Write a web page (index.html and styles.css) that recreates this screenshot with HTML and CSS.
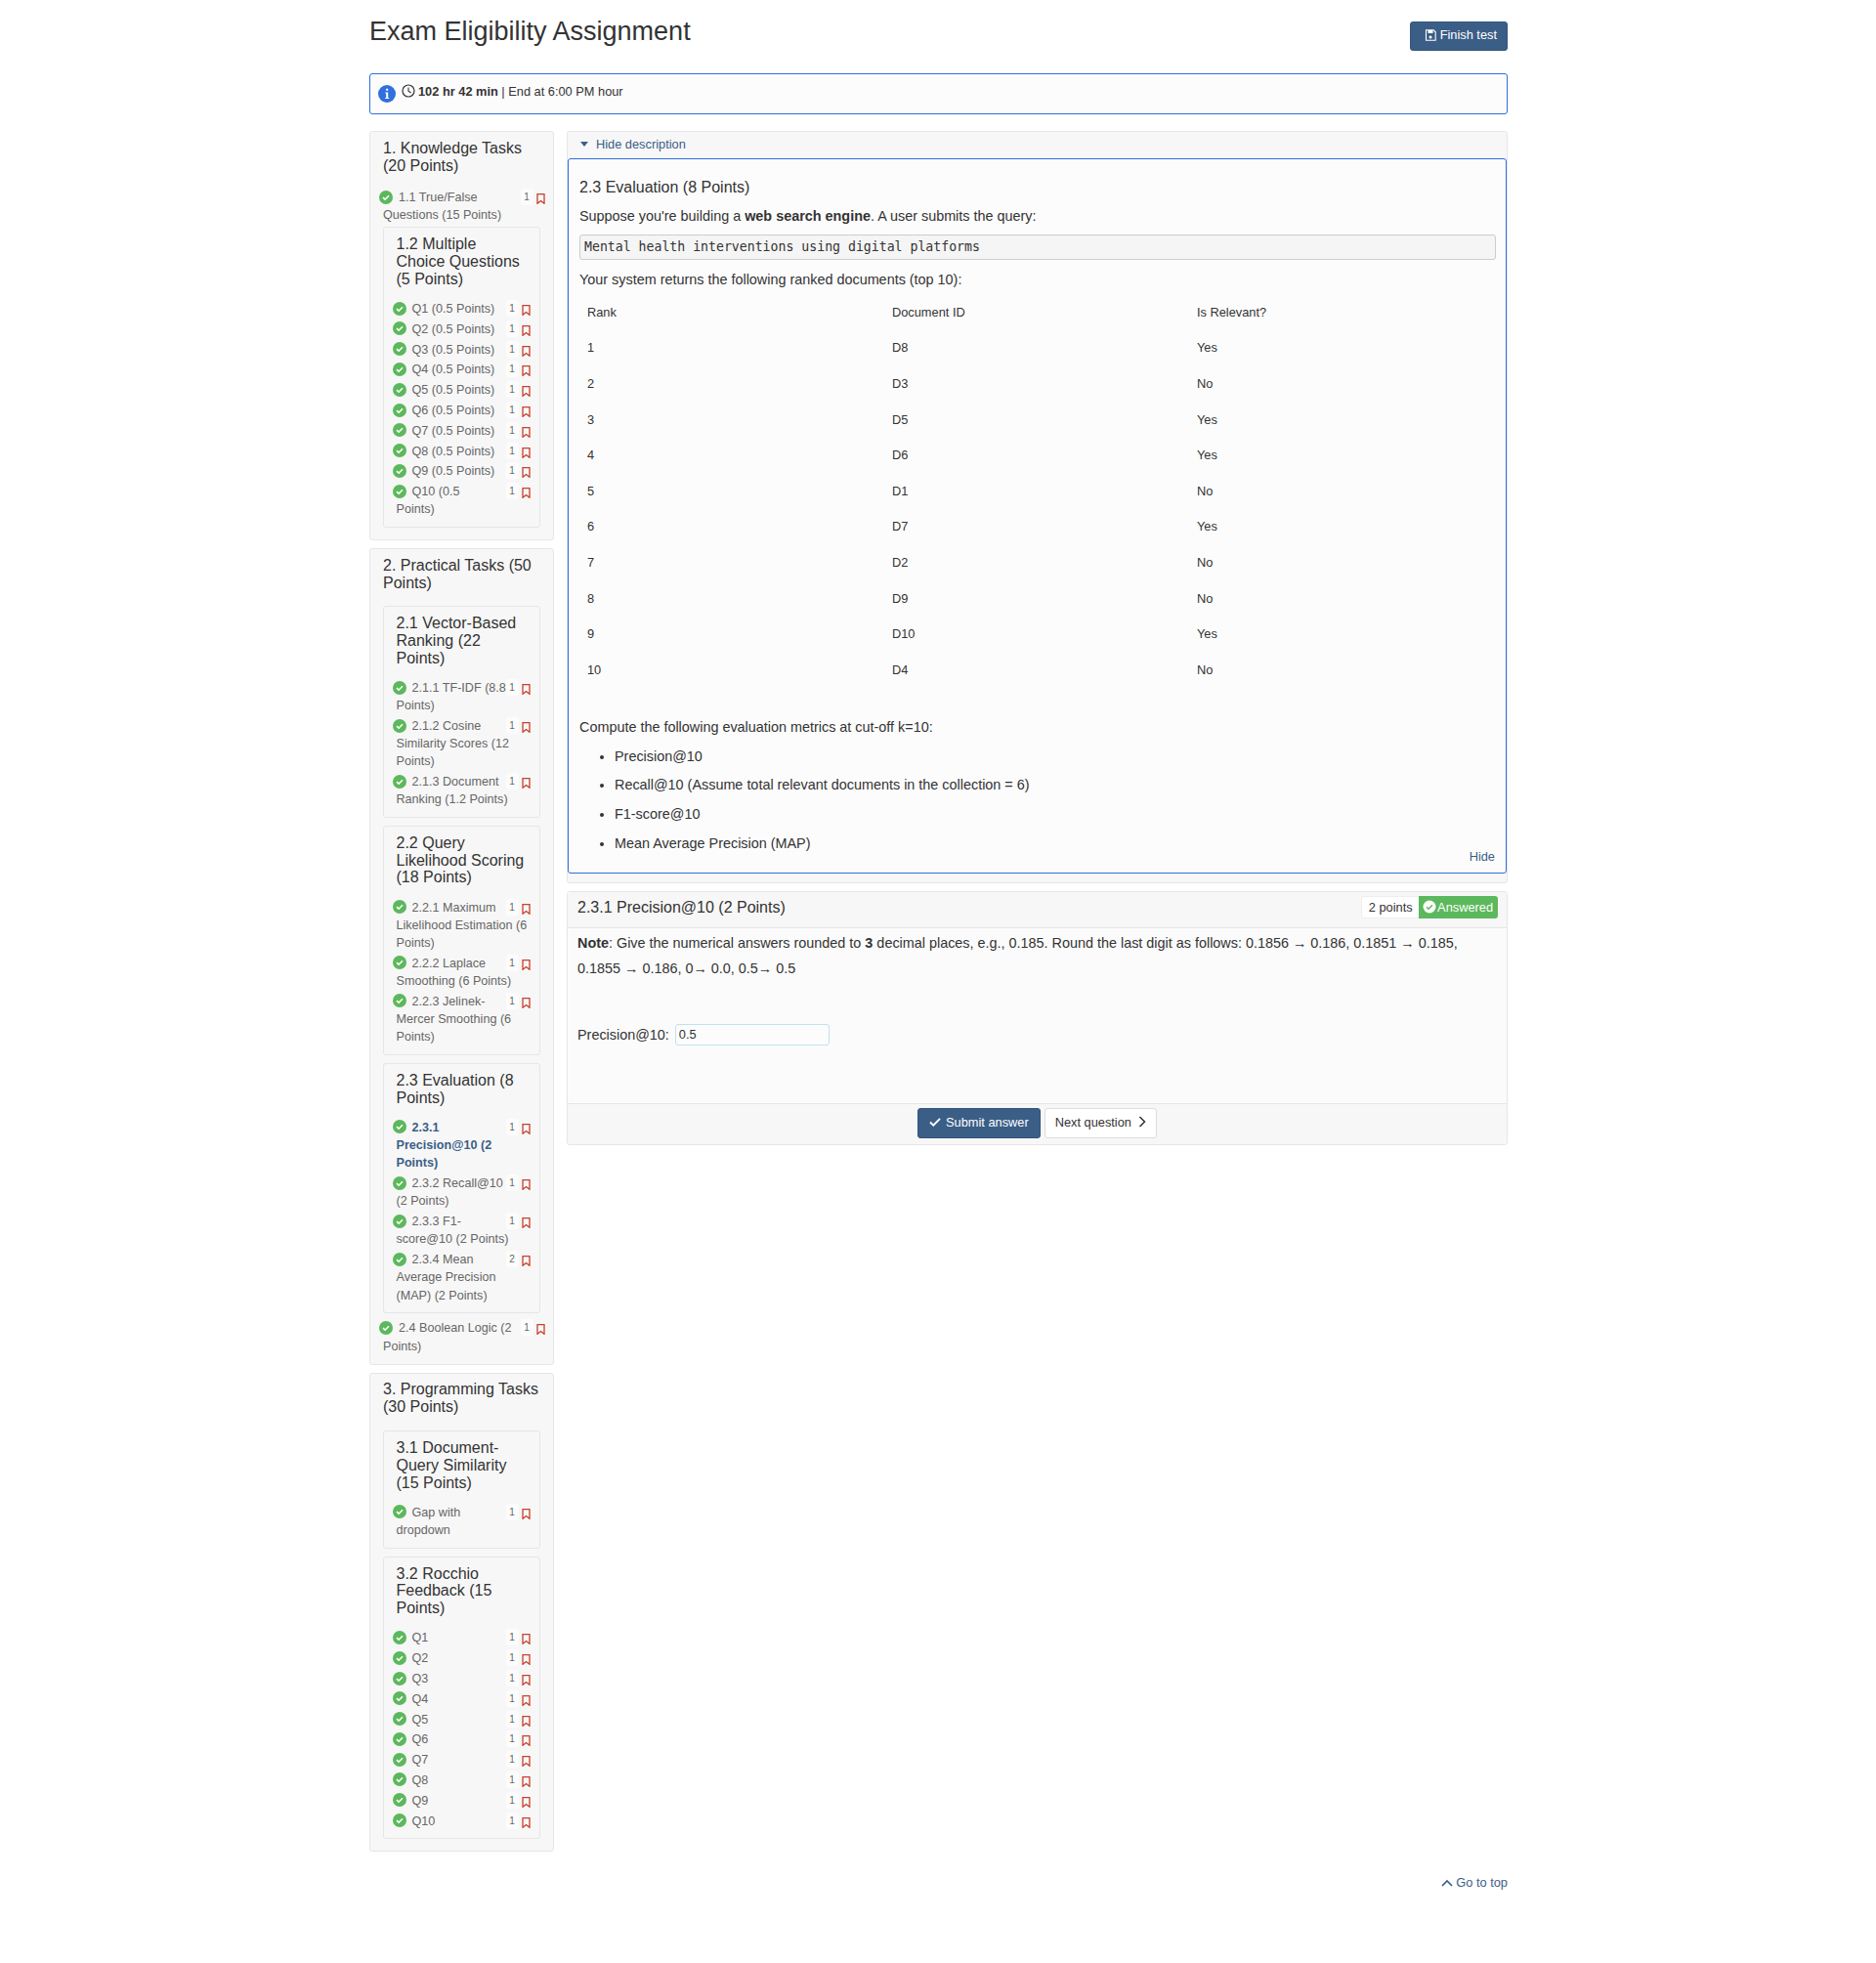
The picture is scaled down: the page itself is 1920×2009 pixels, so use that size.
FILE: index.html
```html
<!DOCTYPE html>
<html lang="en">
<head>
<meta charset="utf-8">
<title>Exam Eligibility Assignment</title>
<link rel="stylesheet" href="styles.css">
</head>
<body>
<svg class="defs" width="0" height="0">
<symbol id="ok" viewBox="0 0 14 14"><circle cx="7" cy="7" r="7" fill="#5cb85c"/><path d="M4 7.200l2.100 2L10 5.300" fill="none" stroke="#fff" stroke-width="1.600"/></symbol>
<symbol id="bm" viewBox="0 0 9 11"><path d="M1 .7h7v9.600L4.500 7.600 1 10.300z" fill="none" stroke="#c9402c" stroke-width="1.300"/></symbol>
</svg>
<div class="page">
  <header class="top">
    <h1 class="title">Exam Eligibility Assignment</h1>
    <a class="btn btn-primary finish"><svg class="ic" viewBox="0 0 12 12" width="12" height="12"><path d="M1.500.8h7.700l2 2v8.400h-9.700z" fill="none" stroke="#fff" stroke-width="1.100"/><path d="M3.500 1h5v3h-5z" fill="#fff"/><circle cx="6" cy="8" r="1.500" fill="#fff"/></svg>Finish test</a>
  </header>
  <div class="alert">
    <svg class="info" viewBox="0 0 18 18" width="18" height="18"><circle cx="9" cy="9" r="9" fill="#2f6fde"/><path d="M7.300 7.500h2.900v5.500h1v1H7.200v-1h1v-4.500h-1z M8.100 3.700h2.100v2.100H8.100z" fill="#fff"/></svg>
    <svg class="clock" viewBox="0 0 14 14" width="14" height="14"><circle cx="7" cy="7" r="6" fill="none" stroke="#333" stroke-width="1.200"/><path d="M7 3.500V7.300L9.600 9" fill="none" stroke="#333" stroke-width="1.100"/></svg>
    <span><b class="time">102 hr 42 min</b> | End at 6:00 PM hour</span>
  </div>
  <div class="layout">
    <aside class="side">
      <section class="box">
        <h4 class="head">1. Knowledge Tasks (20 Points)</h4>
        <div class="item"><span class="flag"><i>1</i><svg class="bm"><use href="#bm"/></svg></span><svg class="ok"><use href="#ok"/></svg>1.1 True/False Questions (15 Points)</div>
        <div class="box sub">
          <h4 class="head">1.2 Multiple Choice Questions (5 Points)</h4>
          <div class="item"><span class="flag"><i>1</i><svg class="bm"><use href="#bm"/></svg></span><svg class="ok"><use href="#ok"/></svg>Q1 (0.5 Points)</div>
          <div class="item"><span class="flag"><i>1</i><svg class="bm"><use href="#bm"/></svg></span><svg class="ok"><use href="#ok"/></svg>Q2 (0.5 Points)</div>
          <div class="item"><span class="flag"><i>1</i><svg class="bm"><use href="#bm"/></svg></span><svg class="ok"><use href="#ok"/></svg>Q3 (0.5 Points)</div>
          <div class="item"><span class="flag"><i>1</i><svg class="bm"><use href="#bm"/></svg></span><svg class="ok"><use href="#ok"/></svg>Q4 (0.5 Points)</div>
          <div class="item"><span class="flag"><i>1</i><svg class="bm"><use href="#bm"/></svg></span><svg class="ok"><use href="#ok"/></svg>Q5 (0.5 Points)</div>
          <div class="item"><span class="flag"><i>1</i><svg class="bm"><use href="#bm"/></svg></span><svg class="ok"><use href="#ok"/></svg>Q6 (0.5 Points)</div>
          <div class="item"><span class="flag"><i>1</i><svg class="bm"><use href="#bm"/></svg></span><svg class="ok"><use href="#ok"/></svg>Q7 (0.5 Points)</div>
          <div class="item"><span class="flag"><i>1</i><svg class="bm"><use href="#bm"/></svg></span><svg class="ok"><use href="#ok"/></svg>Q8 (0.5 Points)</div>
          <div class="item"><span class="flag"><i>1</i><svg class="bm"><use href="#bm"/></svg></span><svg class="ok"><use href="#ok"/></svg>Q9 (0.5 Points)</div>
          <div class="item"><span class="flag"><i>1</i><svg class="bm"><use href="#bm"/></svg></span><svg class="ok"><use href="#ok"/></svg>Q10 (0.5<br>Points)</div>
        </div>
      </section>
      <section class="box">
        <h4 class="head">2. Practical Tasks (50 Points)</h4>
        <div class="box sub">
          <h4 class="head">2.1 Vector-Based Ranking (22 Points)</h4>
          <div class="item"><span class="flag"><i>1</i><svg class="bm"><use href="#bm"/></svg></span><svg class="ok"><use href="#ok"/></svg>2.1.1 TF-IDF (8.8 Points)</div>
          <div class="item"><span class="flag"><i>1</i><svg class="bm"><use href="#bm"/></svg></span><svg class="ok"><use href="#ok"/></svg>2.1.2 Cosine Similarity Scores (12 Points)</div>
          <div class="item"><span class="flag"><i>1</i><svg class="bm"><use href="#bm"/></svg></span><svg class="ok"><use href="#ok"/></svg>2.1.3 Document Ranking (1.2 Points)</div>
        </div>
        <div class="box sub">
          <h4 class="head">2.2 Query Likelihood Scoring (18 Points)</h4>
          <div class="item"><span class="flag"><i>1</i><svg class="bm"><use href="#bm"/></svg></span><svg class="ok"><use href="#ok"/></svg>2.2.1 Maximum Likelihood Estimation (6 Points)</div>
          <div class="item"><span class="flag"><i>1</i><svg class="bm"><use href="#bm"/></svg></span><svg class="ok"><use href="#ok"/></svg>2.2.2 Laplace Smoothing (6 Points)</div>
          <div class="item"><span class="flag"><i>1</i><svg class="bm"><use href="#bm"/></svg></span><svg class="ok"><use href="#ok"/></svg>2.2.3 Jelinek-Mercer Smoothing (6 Points)</div>
        </div>
        <div class="box sub">
          <h4 class="head">2.3 Evaluation (8 Points)</h4>
          <div class="item current"><span class="flag"><i>1</i><svg class="bm"><use href="#bm"/></svg></span><svg class="ok"><use href="#ok"/></svg>2.3.1 Precision@10 (2 Points)</div>
          <div class="item"><span class="flag"><i>1</i><svg class="bm"><use href="#bm"/></svg></span><svg class="ok"><use href="#ok"/></svg>2.3.2 Recall@10 (2 Points)</div>
          <div class="item"><span class="flag"><i>1</i><svg class="bm"><use href="#bm"/></svg></span><svg class="ok"><use href="#ok"/></svg>2.3.3 F1-score@10 (2 Points)</div>
          <div class="item"><span class="flag"><i>2</i><svg class="bm"><use href="#bm"/></svg></span><svg class="ok"><use href="#ok"/></svg>2.3.4 Mean Average Precision (MAP) (2 Points)</div>
        </div>
        <div class="item"><span class="flag"><i>1</i><svg class="bm"><use href="#bm"/></svg></span><svg class="ok"><use href="#ok"/></svg>2.4 Boolean Logic (2 Points)</div>
      </section>
      <section class="box">
        <h4 class="head">3. Programming Tasks (30 Points)</h4>
        <div class="box sub">
          <h4 class="head">3.1 Document-Query Similarity (15 Points)</h4>
          <div class="item"><span class="flag"><i>1</i><svg class="bm"><use href="#bm"/></svg></span><svg class="ok"><use href="#ok"/></svg>Gap with dropdown</div>
        </div>
        <div class="box sub">
          <h4 class="head">3.2 Rocchio Feedback (15 Points)</h4>
          <div class="item"><span class="flag"><i>1</i><svg class="bm"><use href="#bm"/></svg></span><svg class="ok"><use href="#ok"/></svg>Q1</div>
          <div class="item"><span class="flag"><i>1</i><svg class="bm"><use href="#bm"/></svg></span><svg class="ok"><use href="#ok"/></svg>Q2</div>
          <div class="item"><span class="flag"><i>1</i><svg class="bm"><use href="#bm"/></svg></span><svg class="ok"><use href="#ok"/></svg>Q3</div>
          <div class="item"><span class="flag"><i>1</i><svg class="bm"><use href="#bm"/></svg></span><svg class="ok"><use href="#ok"/></svg>Q4</div>
          <div class="item"><span class="flag"><i>1</i><svg class="bm"><use href="#bm"/></svg></span><svg class="ok"><use href="#ok"/></svg>Q5</div>
          <div class="item"><span class="flag"><i>1</i><svg class="bm"><use href="#bm"/></svg></span><svg class="ok"><use href="#ok"/></svg>Q6</div>
          <div class="item"><span class="flag"><i>1</i><svg class="bm"><use href="#bm"/></svg></span><svg class="ok"><use href="#ok"/></svg>Q7</div>
          <div class="item"><span class="flag"><i>1</i><svg class="bm"><use href="#bm"/></svg></span><svg class="ok"><use href="#ok"/></svg>Q8</div>
          <div class="item"><span class="flag"><i>1</i><svg class="bm"><use href="#bm"/></svg></span><svg class="ok"><use href="#ok"/></svg>Q9</div>
          <div class="item"><span class="flag"><i>1</i><svg class="bm"><use href="#bm"/></svg></span><svg class="ok"><use href="#ok"/></svg>Q10</div>
        </div>
      </section>
    </aside>
    <main class="main">
      <section class="desc">
        <a class="toggle"><span class="caret"></span>Hide description</a>
        <div class="desc-body">
          <h4 class="desc-title">2.3 Evaluation (8 Points)</h4>
          <p class="lead">Suppose you're building a <b>web search engine</b>. A user submits the query:</p>
          <pre class="code">Mental health interventions using digital platforms</pre>
          <p class="intro">Your system returns the following ranked documents (top 10):</p>
          <table class="docs">
            <tr><td>Rank</td><td>Document ID</td><td>Is Relevant?</td></tr>
            <tr><td>1</td><td>D8</td><td>Yes</td></tr>
            <tr><td>2</td><td>D3</td><td>No</td></tr>
            <tr><td>3</td><td>D5</td><td>Yes</td></tr>
            <tr><td>4</td><td>D6</td><td>Yes</td></tr>
            <tr><td>5</td><td>D1</td><td>No</td></tr>
            <tr><td>6</td><td>D7</td><td>Yes</td></tr>
            <tr><td>7</td><td>D2</td><td>No</td></tr>
            <tr><td>8</td><td>D9</td><td>No</td></tr>
            <tr><td>9</td><td>D10</td><td>Yes</td></tr>
            <tr><td>10</td><td>D4</td><td>No</td></tr>
          </table>
          <p class="compute">Compute the following evaluation metrics at cut-off k=10:</p>
          <ul class="metrics">
            <li>Precision@10</li>
            <li>Recall@10 (Assume total relevant documents in the collection = 6)</li>
            <li>F1-score@10</li>
            <li>Mean Average Precision (MAP)</li>
          </ul>
          <a class="hide">Hide</a>
        </div>
      </section>
      <section class="question">
        <div class="q-head">
          <h4 class="q-title">2.3.1 Precision@10 (2 Points)</h4>
          <div class="q-status"><span class="points">2 points</span><span class="answered"><svg class="ans-ic" viewBox="0 0 14 14"><circle cx="7" cy="7" r="6.500" fill="#fff"/><path d="M4 7.200l2.100 2L10 5.300" fill="none" stroke="#5cb85c" stroke-width="1.500"/></svg>Answered</span></div>
        </div>
        <div class="q-body">
          <p class="note"><b>Note</b>: Give the numerical answers rounded to <b>3</b> decimal places, e.g., 0.185. Round the last digit as follows: 0.1856 → 0.186, 0.1851 → 0.185, 0.1855 → 0.186, 0→ 0.0, 0.5→ 0.5</p>
          <div class="answer"><label for="p10">Precision@10:</label><input id="p10" class="field" type="text" value="0.5"></div>
        </div>
        <div class="q-foot">
          <a class="btn btn-primary submit"><svg class="ic" viewBox="0 0 12 12" width="12" height="12"><path d="M1 6.500l3.300 3.200L11 2.800" fill="none" stroke="#fff" stroke-width="1.900"/></svg>Submit answer</a>
          <a class="btn btn-default">Next question<svg class="ic-r" viewBox="0 0 8 12" width="8" height="12"><path d="M1.500 1l5 5-5 5" fill="none" stroke="#333" stroke-width="1.500"/></svg></a>
        </div>
      </section>
    </main>
  </div>
  <footer class="foot"><a class="gotop"><svg viewBox="0 0 12 8" width="12" height="8"><path d="M1 7l5-5 5 5" fill="none" stroke="#3b5e87" stroke-width="1.700"/></svg>Go to top</a></footer>
</div>
</body>
</html>
```

FILE: styles.css
```css
* { box-sizing: border-box; }
html, body { margin: 0; padding: 0; background: #fff; }
body { font-family: "Liberation Sans", Arial, sans-serif; font-size: 14px; color: #333; }
.defs { position: absolute; }
.page { width: 1165px; margin-left: 378px; }
.top { display: flex; justify-content: space-between; align-items: flex-start; height: 75px; padding-top: 15px; }
.title { margin: 0; font-size: 27px; line-height: 34px; font-weight: 400; color: #333; }
.btn { display: inline-flex; align-items: center; height: 30px; padding: 0 10px 2px; border-radius: 3px; font-size: 12.8px; border: 1px solid transparent; }
.btn-primary { background: #3b5e87; border-color: #34547a; color: #fff; }
.btn-default { background: #fff; border-color: #ddd; color: #333; }
.finish { margin-top: 7px; padding: 0 10px 3px 14px; }
.ic { margin-right: 4px; }
.ic-r { margin-left: 7px; }
.submit { padding: 0 11px 2px; }
.submit .ic { margin-right: 5px; }
.alert { display: flex; align-items: center; height: 42px; padding: 0 8px 6px; border: 1px solid #2f6fde; border-radius: 3px; background: #fcfcfc; font-size: 12.8px; }
.info { margin-right: 6px; margin-top: 5px; }
.clock { margin-right: 3px; }
.time { font-weight: 700; }
.layout { display: flex; gap: 13.500px; align-items: flex-start; margin-top: 17px; }
.side { width: 188.500px; flex: none; display: flex; flex-direction: column; gap: 7.600px; }
.box { background: #f7f7f7; border: 1px solid #e6e6e6; border-radius: 3px; padding: 7.700px 13px 6.700px; }
.sub { margin: 0 0 6px; padding: 8px 0 8.700px 12.500px; }
.sub + .sub { margin-top: 7.600px; }
.side > .box > .sub:last-child { margin-bottom: 5.300px; }
.head { margin: 0 0 14.500px; font-size: 16px; line-height: 18px; font-weight: 400; color: #333; }
.sub .head { margin-right: 13px; margin-bottom: 12.500px; line-height: 17.800px; }
.sub > .item:last-child { margin-bottom: 0; }
.item { font-size: 12.600px; line-height: 18.200px; color: #666; margin-bottom: 2.600px; padding-right: 7px; }
.sub .item { padding-right: 6px; }
.current { font-weight: 700; color: #3b5e87; }
.ok { display: inline-block; width: 14px; height: 14px; margin: 0 6px 0 -4px; vertical-align: -2.500px; }
.flag { float: right; display: inline-flex; align-items: flex-start; height: 18px; margin: 0 -12px 0 -5px; font-weight: 400; }
.sub .flag { margin-right: 3px; }
.flag i { width: 13px; font-style: normal; font-size: 10px; line-height: 17px; text-align: center; color: #666; background: #fcfcfc; border-radius: 3px; }
.bm { width: 9px; height: 11px; margin: 5px 0 0 3px; }
.main { flex: 1; min-width: 0; }
.desc { background: #f7f7f7; border: 1px solid #e6e6e6; border-radius: 3px; padding-bottom: 9px; }
.toggle { display: block; height: 27px; padding-left: 13px; line-height: 26px; font-size: 12.8px; color: #3b5e87; }
.caret { display: inline-block; width: 0; height: 0; margin-right: 8px; vertical-align: 2px; border: 4.500px solid transparent; border-top: 5px solid #3b5e87; border-bottom: 0; }
.desc-body { background: #fcfcfc; border: 1px solid #2f6fde; border-radius: 3px; padding: 19px 10px 7px 11px; }
.desc-title { margin: 0 0 9px; font-size: 16px; line-height: 20px; font-weight: 400; color: #333; }
p { margin: 0 0 10px; }
.desc-body p { font-size: 14.400px; line-height: 20px; }
.desc-body .lead { margin-bottom: 9px; }
.code { margin: 0 0 10px; height: 26px; padding: 0 4px; font-family: "DejaVu Sans Mono", monospace; font-size: 13.200px; line-height: 24px; color: #333; background: #f5f5f5; border: 1px solid #ccc; border-radius: 3px; }
.desc-body .intro { margin-bottom: 5px; }
.docs { width: 936px; table-layout: fixed; border-collapse: collapse; font-size: 12.8px; margin-bottom: 30px; }
.docs td { height: 36.600px; padding: 0 8px; }
.desc-body .compute { margin-bottom: 10px; }
.metrics { margin: 0; padding-left: 36px; font-size: 14.400px; }
.metrics li { line-height: 20px; margin-bottom: 9.700px; }
.metrics li:last-child { margin-bottom: 0; }
.hide { display: block; text-align: right; margin: -5px 1px 0 0; font-size: 12.8px; line-height: 18px; color: #3b5e87; }
.question { margin-top: 8px; background: #fbfbfb; border: 1px solid #e6e6e6; border-radius: 3px; }
.q-head { display: flex; justify-content: space-between; align-items: center; height: 37px; padding: 0 9px 5px 10px; background: #f7f7f7; border-bottom: 1px solid #e6e6e6; }
.q-title { margin: 0 0 -1px; font-size: 16px; font-weight: 400; color: #333; }
.q-status { display: flex; height: 23px; font-size: 12.8px; line-height: 21px; }
.points { padding: 0 6.500px; border: 1px solid #eee; border-right: 0; border-radius: 3px 0 0 3px; background: #fff; }
.answered { display: flex; align-items: center; padding: 0 5px 0 4px; color: #fff; background: #5cb85c; border-radius: 0 3px 3px 0; }
.ans-ic { width: 14px; height: 14px; margin-right: 1px; }
.q-body { height: 179px; padding: 2.500px 10px; }
.note { font-size: 14.400px; line-height: 26px; margin: 0 0 43.500px; }
.answer { display: flex; align-items: center; font-size: 14.400px; }
.field { width: 158px; height: 22px; margin-left: 6px; padding: 0 3px; font: 12.8px "Liberation Sans", Arial, sans-serif; color: #333; background: #fcfcfc; border: 1px solid #bfe3ee; border-radius: 3px; outline: 0; }
.q-foot { display: flex; justify-content: center; gap: 4px; height: 42px; padding-top: 4px; background: #f7f7f7; border-top: 1px solid #e6e6e6; border-radius: 0 0 3px 3px; }
.q-foot .btn { height: 31px; }
.foot { display: flex; justify-content: flex-end; margin-top: 23px; }
.gotop { display: inline-flex; align-items: center; gap: 3px; font-size: 12.8px; line-height: 18px; color: #3b5e87; }
```
